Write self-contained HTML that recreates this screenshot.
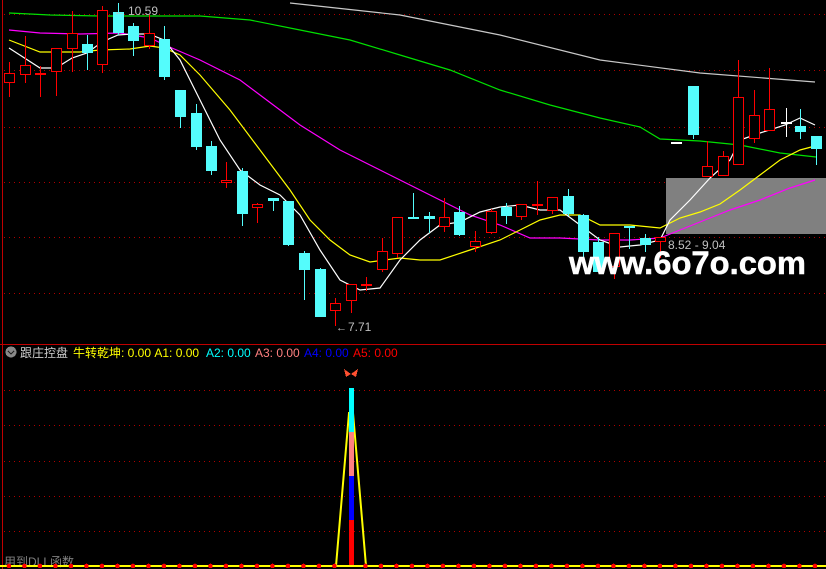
<!DOCTYPE html>
<html><head><meta charset="utf-8"><style>
html,body{margin:0;padding:0;background:#000;width:826px;height:569px;overflow:hidden}
svg{display:block}
text{font-family:"Liberation Sans","Noto Sans CJK SC",sans-serif}
</style></head><body>
<svg width="826" height="569" viewBox="0 0 826 569" xmlns="http://www.w3.org/2000/svg" shape-rendering="crispEdges">
<rect width="826" height="569" fill="#000"/>
<g stroke="#b00000" stroke-width="1" stroke-dasharray="1,4">
<line x1="4" y1="14.5" x2="826" y2="14.5"/><line x1="4" y1="70.5" x2="826" y2="70.5"/><line x1="4" y1="127.5" x2="826" y2="127.5"/><line x1="4" y1="182.5" x2="826" y2="182.5"/><line x1="4" y1="237.5" x2="826" y2="237.5"/><line x1="4" y1="293.5" x2="826" y2="293.5"/>
<line x1="4" y1="390.5" x2="826" y2="390.5"/><line x1="4" y1="425.5" x2="826" y2="425.5"/><line x1="4" y1="461.5" x2="826" y2="461.5"/><line x1="4" y1="496.5" x2="826" y2="496.5"/><line x1="4" y1="531.5" x2="826" y2="531.5"/>
</g>
<rect x="666" y="178" width="160" height="56" fill="#808080"/>
<line x1="2.5" y1="0" x2="2.5" y2="569" stroke="#c00000"/>
<line x1="0" y1="344.5" x2="826" y2="344.5" stroke="#c00000"/>
<g shape-rendering="auto" fill="none" stroke-width="1.2">
<polyline stroke="#c8c8c8" points="290,3 400,15 500,35 600,60 700,73 815,82"/>
<polyline stroke="#00e000" points="9,13 30,14 50,15 100,16 200,16 250,20 300,30 350,40 400,55 450,70 500,90 550,105 600,118 640,127 660,139 700,141 740,145 780,153 816,157"/>
<polyline stroke="#ff00ff" points="9,30 40,33 80,34 120,33 150,38 165,45 200,60 240,80 260,95 300,125 340,150 380,170 410,185 440,200 470,215 500,225 530,238 560,238 600,240 630,240 660,238 680,230 710,218 730,210 760,200 790,188 815,180"/>
<polyline stroke="#ffff00" points="9,40 40,52 80,52 100,50 130,49 150,46 164,48 180,55 200,75 230,110 260,150 290,190 310,220 330,240 350,255 370,262 400,258 420,260 440,260 470,250 500,240 520,230 540,220 560,215 580,215 600,225 630,225 660,228 680,218 700,212 720,204 740,190 760,175 780,160 800,150 815,146"/>
<polyline stroke="#ffffff" points="9,48 40,68 56,68 72,58 87,53 102,42 118,35 133,34 149,34 164,40 180,60 200,100 220,140 240,170 260,185 280,195 300,215 320,250 340,280 360,290 380,288 400,260 420,240 440,225 460,222 480,212 500,207 520,205 540,210 560,210 580,225 600,240 620,247 640,245 660,240 670,220 690,200 710,178 730,160 740,140 760,133 785,125 800,118 815,125"/>
</g>
<g id="c"></g>
<text x="128" y="15" fill="#c0c0c0" font-size="12">10.59</text>
<text x="348" y="331" fill="#c0c0c0" font-size="12">7.71</text>
<text x="336" y="331" fill="#c0c0c0" font-size="11">←</text>
<text x="114" y="15" fill="#c0c0c0" font-size="11">←</text>
<text x="668" y="249" fill="#c0c0c0" font-size="12">8.52 - 9.04</text>
<text x="569" y="274" fill="#fff" font-size="32" font-weight="bold" stroke="#fff" stroke-width="0.5" textLength="237" lengthAdjust="spacingAndGlyphs" shape-rendering="auto">www.6o7o.com</text>
<circle cx="11" cy="352" r="5.5" fill="#888"/>
<path d="M8 351 L11 354 L14 351" stroke="#222" stroke-width="1.3" fill="none"/>
<g font-size="12" shape-rendering="auto">
<text x="20" y="357" fill="#d0d0d0">跟庄控盘</text>
<text x="73" y="357" fill="#ffff00">牛转乾坤: 0.00  A1: 0.00</text>
<text x="206" y="357" fill="#00ffff">A2: 0.00</text>
<text x="255" y="357" fill="#ff8080">A3: 0.00</text>
<text x="304" y="357" fill="#0000ff">A4: 0.00</text>
<text x="353" y="357" fill="#ff0000">A5: 0.00</text>
<text x="4" y="566" fill="#808080">用到DLL函数</text>
</g>
<path d="M351 374 L344 369 L346 377 Z M351 374 L358 369 L356 377 Z" fill="#ff5030"/>
<polyline points="336,566 349,413 353,413 366,566" stroke="#ffff00" stroke-width="2" fill="none" shape-rendering="auto"/>
<rect x="349" y="388" width="5" height="44" fill="#00ffff"/>
<rect x="349" y="432" width="5" height="44" fill="#ff8080"/>
<rect x="349" y="476" width="5" height="44" fill="#0000ff"/>
<rect x="349" y="520" width="5" height="46" fill="#ff0000"/>
<line x1="0" y1="566" x2="826" y2="566" stroke="#ffff00" stroke-width="2"/>
<g id="d" fill="#ff0000"></g>
</svg>
<script>
var C=[[9,'r',73,83,62,97],[25,'r',65,75,36,83],[40,'r',73,74,66,97],[56,'r',48,72,48,96],[72,'r',33,49,11,72],[87,'c',44,53,35,70],[102,'r',10,65,6,73],[118,'c',12,33,3,35],[133,'c',26,41,23,56],[149,'r',33,46,15,49],[164,'c',39,77,26,80],[180,'c',90,117,90,128],[196,'c',113,147,104,150],[211,'c',146,171,141,175],[226,'r',180,183,162,188],[242,'c',171,214,168,226],[257,'r',204,208,203,223],[273,'c',198,201,198,211],[288,'c',201,245,201,246],[304,'c',253,270,251,300],[320,'c',269,317,268,317],[335,'r',303,311,298,326],[351,'r',284,301,284,313],[366,'r',284,285,277,291],[382,'r',251,270,238,272],[397,'r',217,254,217,258],[413,'c',217,218,193,218],[429,'c',216,219,212,233],[444,'r',217,227,198,232],[459,'c',212,235,206,236],[475,'r',241,247,231,252],[491,'r',211,233,209,234],[506,'c',207,216,203,224],[521,'r',204,217,204,220],[537,'r',204,205,181,215],[552,'r',197,211,197,214],[568,'c',196,214,189,216],[583,'c',215,252,214,262],[598,'c',242,272,237,272],[614,'r',233,267,233,279],[629,'c',226,227,226,249],[645,'c',238,245,234,252],[660,'r',237,242,237,258],[676,'w',142,143,142,143],[693,'c',86,135,86,139],[707,'r',166,177,141,177],[723,'r',156,176,151,176],[738,'r',97,165,60,165],[754,'r',115,139,90,143],[769,'r',109,131,68,131],[786,'w',122,123,108,137],[800,'c',126,132,109,139],[816,'c',136,149,136,165]];
var g=document.getElementById('c'),s='';
C.forEach(function(k){var x=k[0],t=k[1],o=k[2],c=k[3],h=k[4],l=k[5];
var col=t=='r'?'#ff0000':(t=='c'?'#54fcfc':'#ffffff');
s+='<line x1="'+(x+.5)+'" y1="'+h+'" x2="'+(x+.5)+'" y2="'+l+'" stroke="'+col+'"/>';
if(c-o<=2){s+='<rect x="'+(x-5)+'" y="'+o+'" width="11" height="2" fill="'+col+'"/>';}
else if(t=='r'){s+='<rect x="'+(x-4.5)+'" y="'+(o+.5)+'" width="10" height="'+(c-o-1)+'" fill="#000" stroke="'+col+'"/>';}
else{s+='<rect x="'+(x-5)+'" y="'+o+'" width="11" height="'+(c-o)+'" fill="'+col+'"/>';}
});
g.innerHTML=s;
var d=document.getElementById('d'),t='';
for(var x=9;x<826;x+=15.5){if(Math.abs(x-351)>3)t+='<circle cx="'+x+'" cy="566" r="2.3"/>';}
d.innerHTML=t;
</script>
</body></html>
